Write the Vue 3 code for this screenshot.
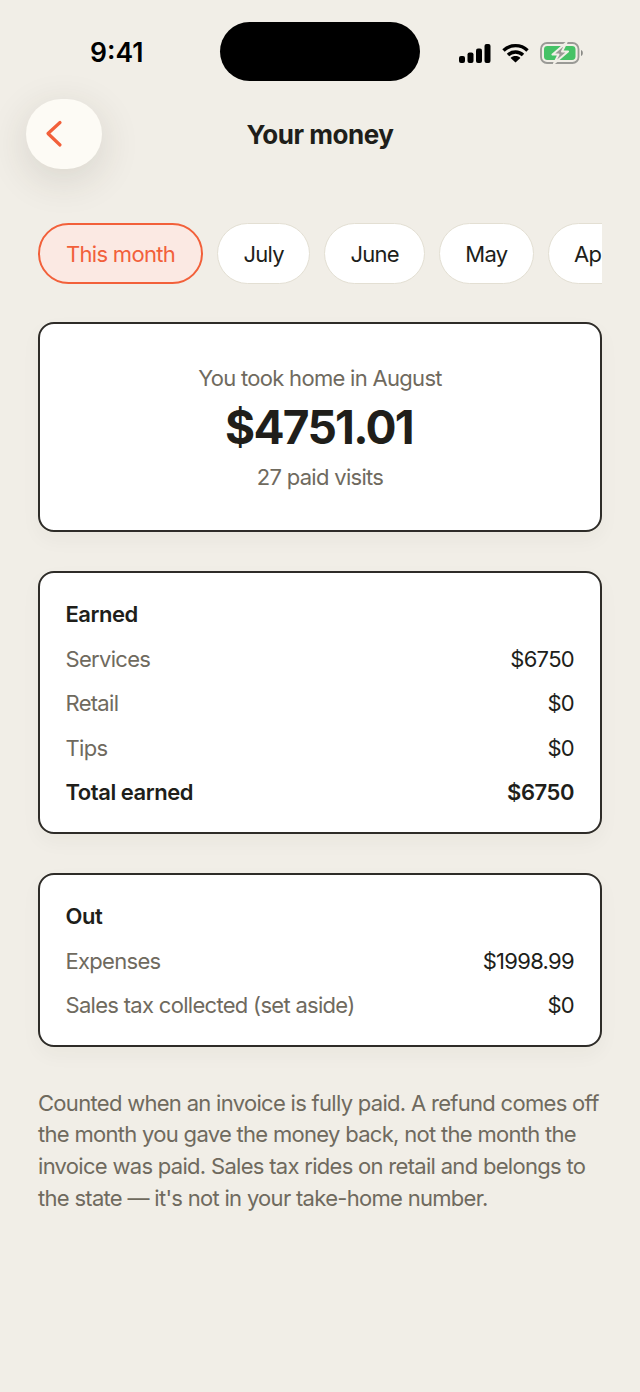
<script setup>
const pills = [
  { label: 'This month', active: true },
  { label: 'July' },
  { label: 'June' },
  { label: 'May' },
  { label: 'April' },
]
const earned = [
  ['Services', '$6750'],
  ['Retail', '$0'],
  ['Tips', '$0'],
]
const out = [
  ['Expenses', '$1998.99'],
  ['Sales tax collected (set aside)', '$0'],
]
</script>

<template>
  <div class="screen">
    <div class="status">
      <span class="time">9:41</span>
      <div class="island"></div>
      <div class="sys">
        <svg width="32" height="19" viewBox="0 0 32 19"><rect x="0" y="12" width="6" height="7" rx="2" /><rect x="8.5" y="8.5" width="6" height="10.5" rx="2" /><rect x="17" y="4.5" width="6" height="14.5" rx="2" /><rect x="25.5" y="0" width="6" height="19" rx="2" /></svg>
        <svg width="27" height="20" viewBox="0 0 27 20" fill="none" stroke="#000" stroke-width="3.4"><path d="M1.5 7.5 C8 1 19 1 25.5 7.5" /><path d="M6 12 C10 8 17 8 21 12" /><path d="M13.5 19.5 L8.6 15 C11 12.4 16 12.4 18.4 15 Z" fill="#000" stroke="none" /></svg>
        <svg class="batt" width="44" height="22" viewBox="0 0 44 22" fill="none">
          <rect x="1" y="1" width="37.5" height="20" rx="6" stroke="#9a9a96" stroke-width="1.8" />
          <rect x="4" y="4" width="31.5" height="14" rx="3.4" fill="#45c266" />
          <path d="M41 8 C43.4 8.5 43.4 13.5 41 14 Z" fill="#8a8a86" />
          <path d="M26.5 0.5 L12.5 12.5 H18.5 L14 21.5 L28 9.5 H22 Z" fill="#9a9a96" stroke="#f1eee7" stroke-width="2" stroke-linejoin="round" />
        </svg>
      </div>
    </div>

    <header class="nav">
      <button class="back" aria-label="Back">
        <svg width="20" height="28" viewBox="0 0 20 28" fill="none" stroke="#f2603a" stroke-width="3.2" stroke-linecap="round" stroke-linejoin="round"><path d="M16 2.5 L4 13.5 L16 25" /></svg>
      </button>
      <h1>Your money</h1>
    </header>

    <div class="pills">
      <div v-for="p in pills" :key="p.label" class="pill" :class="{ active: p.active }">{{ p.label }}</div>
    </div>

    <section class="card hero">
      <div class="hero-label">You took home in August</div>
      <div class="hero-amount">$4751.01</div>
      <div class="hero-sub">27 paid visits</div>
    </section>

    <section class="card list">
      <div class="row head"><span>Earned</span></div>
      <div v-for="r in earned" :key="r[0]" class="row"><span class="k">{{ r[0] }}</span><span class="v">{{ r[1] }}</span></div>
      <div class="row head"><span>Total earned</span><span>$6750</span></div>
    </section>

    <section class="card list">
      <div class="row head"><span>Out</span></div>
      <div v-for="r in out" :key="r[0]" class="row"><span class="k">{{ r[0] }}</span><span class="v">{{ r[1] }}</span></div>
    </section>

    <p class="note">Counted when an invoice is fully paid. A refund comes off the month you gave the money back, not the month the invoice was paid. Sales tax rides on retail and belongs to the state — it's not in your take-home number.</p>
  </div>
</template>

<style>
html, body { margin: 0; background: #f1eee7; }
</style>

<style scoped>
.screen {
  width: 640px;
  height: 1392px;
  overflow: hidden;
  box-sizing: border-box;
  background: #f1eee7;
  font-family: Inter, "Liberation Sans", sans-serif;
  color: #201e1a;
}
.status {
  height: 99px;
  box-sizing: border-box;
  padding-top: 22px;
  display: flex;
  align-items: flex-start;
  position: relative;
}
.time {
  position: absolute;
  left: 90px;
  top: 37px;
  font-size: 26.5px;
  line-height: 30px;
  font-weight: 600;
  color: #000;
}
.island {
  width: 200px;
  height: 59px;
  border-radius: 30px;
  background: #000;
  margin-left: 220px;
}
.sys {
  position: absolute;
  left: 459px;
  top: 42px;
  display: flex;
  align-items: center;
  gap: 11px;
}
.sys svg { display: block; }
.nav {
  height: 70px;
  display: flex;
  align-items: center;
  justify-content: center;
}
.nav h1 {
  margin: 0;
  font-size: 26px;
  font-weight: 700;
  letter-spacing: -0.45px;
  color: #201e1a;
}
.back {
  position: absolute;
  left: 26px;
  top: 99px;
  width: 76px;
  height: 70px;
  padding: 0 20px 0 0;
  border: 0;
  border-radius: 35px;
  background: #fdfbf5;
  box-shadow: 0 10px 40px rgba(60, 50, 35, 0.14);
  display: flex;
  align-items: center;
  justify-content: center;
}
.pills {
  display: flex;
  gap: 14.4px;
  margin: 54px 38px 0 38px;
  overflow: hidden;
  height: 61px;
}
.pill {
  flex: none;
  box-sizing: border-box;
  height: 61px;
  padding: 0 25px;
  border-radius: 31px;
  background: #fff;
  border: 1.5px solid #e3dfd3;
  display: flex;
  align-items: center;
  font-size: 22px;
  letter-spacing: -0.7px;
  color: #201e1a;
}
.pill.active {
  padding: 0 26px;
  background: #fbe9e3;
  border: 2px solid #f2603a;
  color: #f2603a;
}
.card {
  margin: 0 38px;
  box-sizing: border-box;
  background: #fff;
  border: 2px solid #2e2c28;
  border-radius: 16px;
  box-shadow: 0 8px 20px rgba(60, 50, 35, 0.04);
}
.hero {
  margin-top: 38px;
  height: 210px;
  display: flex;
  flex-direction: column;
  align-items: center;
  padding-top: 38px;
}
.hero-label, .hero-sub {
  font-size: 22px;
  line-height: 32px;
  letter-spacing: -0.7px;
  color: #6f6a5e;
}
.hero-amount {
  margin: 1px 2px 0 0;
  font-size: 46px;
  line-height: 65px;
  font-weight: 700;
  letter-spacing: -1.7px;
  color: #201e1a;
}
.hero-sub { margin-top: 1px; }
.list {
  margin-top: 39px;
  padding: 19px 26px 17.5px 25.5px;
}
.row {
  display: flex;
  justify-content: space-between;
  height: 44.5px;
  align-items: center;
  font-size: 22px;
  letter-spacing: -0.7px;
}
.row.head { font-weight: 600; letter-spacing: -0.45px; color: #201e1a; }
.k { color: #6f6a5e; }
.v { color: #201e1a; }
.note {
  margin: 40.5px 38px 0;
  font-size: 22px;
  line-height: 31.7px;
  letter-spacing: -0.7px;
  color: #6f6a5e;
}
</style>
